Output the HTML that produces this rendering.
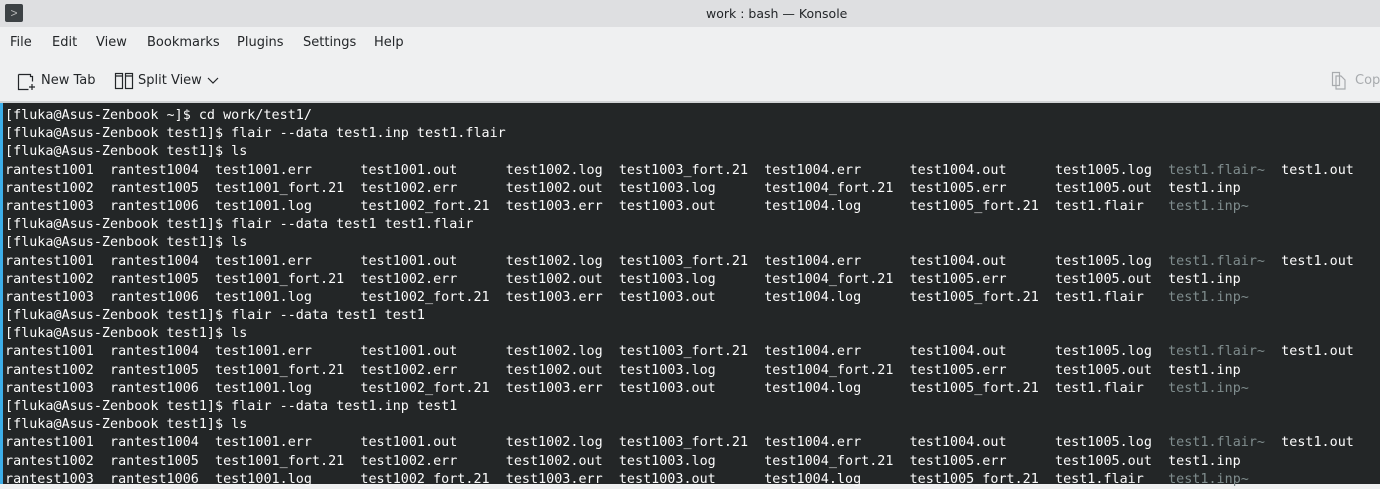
<!DOCTYPE html><html><head><style>
body{margin:0;width:1380px;height:484px;overflow:hidden;background:#eff0f1;font-family:"Liberation Sans","DejaVu Sans",sans-serif;position:relative}
.title{position:absolute;top:0;left:0;width:1380px;height:27px;background:#dedfe1;}
.title .t{position:absolute;left:706px;top:6px;font-size:12.5px;color:#232629;font-family:"DejaVu Sans",sans-serif}
.ic{position:absolute;left:5px;top:4px;width:18px;height:18px;background:#3d4245;border-radius:2px;color:#bbb;font-size:12px;text-align:center;line-height:18px}
.menu{position:absolute;top:35px;font-size:13px;color:#232629;font-family:"DejaVu Sans",sans-serif}
.tb{position:absolute;top:73px;font-size:13px;color:#232629;font-family:"DejaVu Sans",sans-serif}
.sep{position:absolute;top:101px;left:0;width:1380px;height:2px;background:#d0d2d4}
.term{position:absolute;top:103px;left:0;width:1380px;height:381px;background:#232627;border-left:3px solid #3daee9;box-sizing:border-box}
pre{margin:0;padding:4px 0 0 2px;font-family:"DejaVu Sans Mono","Liberation Mono",monospace;font-size:13.4px;letter-spacing:0.015px;line-height:18.18px;color:#fcfcfc}
.g{color:#7f8c8d}
</style></head><body>
<div class="title"><div class="ic">&gt;</div><div class="t">work : bash — Konsole</div></div>
<div class="menu" style="left:10px">File</div>
<div class="menu" style="left:52px">Edit</div>
<div class="menu" style="left:96px">View</div>
<div class="menu" style="left:147px">Bookmarks</div>
<div class="menu" style="left:237px">Plugins</div>
<div class="menu" style="left:303px">Settings</div>
<div class="menu" style="left:374px">Help</div>
<svg style="position:absolute;left:17px;top:71px" width="20" height="20" viewBox="0 0 20 20" fill="none" stroke="#232629" stroke-width="1.2"><path d="M1.5 3.5h12v2h2v5M1.5 3.5v15h10"/><path d="M15 13v6M12 16h6"/></svg>
<div class="tb" style="left:41px">New Tab</div>
<svg style="position:absolute;left:114px;top:72px" width="20" height="18" viewBox="0 0 20 18" fill="none" stroke="#232629" stroke-width="1.2"><rect x="1.5" y="1.5" width="7" height="15"/><rect x="11.5" y="1.5" width="7" height="15"/><path d="M1.5 4h7M11.5 4h7"/></svg>
<div class="tb" style="left:138px">Split View</div>
<svg style="position:absolute;left:207px;top:77px" width="12" height="8" viewBox="0 0 12 8" fill="none" stroke="#232629" stroke-width="1.2"><path d="M1 1l5 5 5-5"/></svg>
<svg style="position:absolute;left:1331px;top:71px" width="16" height="20" viewBox="0 0 16 20" fill="none" stroke="#a8abae" stroke-width="1.2"><path d="M1.5 1.5h7v13h-7z M5 5h5l4 4v9h-9z"/></svg>
<div class="tb" style="left:1355px;color:#a8abae">Copy</div>
<div class="sep"></div>
<div class="term"><pre>[fluka@Asus-Zenbook ~]$ cd work/test1/
[fluka@Asus-Zenbook test1]$ flair --data test1.inp test1.flair
[fluka@Asus-Zenbook test1]$ ls
rantest1001  rantest1004  test1001.err      test1001.out      test1002.log  test1003_fort.21  test1004.err      test1004.out      test1005.log  <span class="g">test1.flair~</span>  test1.out
rantest1002  rantest1005  test1001_fort.21  test1002.err      test1002.out  test1003.log      test1004_fort.21  test1005.err      test1005.out  test1.inp
rantest1003  rantest1006  test1001.log      test1002_fort.21  test1003.err  test1003.out      test1004.log      test1005_fort.21  test1.flair   <span class="g">test1.inp~</span>
[fluka@Asus-Zenbook test1]$ flair --data test1 test1.flair
[fluka@Asus-Zenbook test1]$ ls
rantest1001  rantest1004  test1001.err      test1001.out      test1002.log  test1003_fort.21  test1004.err      test1004.out      test1005.log  <span class="g">test1.flair~</span>  test1.out
rantest1002  rantest1005  test1001_fort.21  test1002.err      test1002.out  test1003.log      test1004_fort.21  test1005.err      test1005.out  test1.inp
rantest1003  rantest1006  test1001.log      test1002_fort.21  test1003.err  test1003.out      test1004.log      test1005_fort.21  test1.flair   <span class="g">test1.inp~</span>
[fluka@Asus-Zenbook test1]$ flair --data test1 test1
[fluka@Asus-Zenbook test1]$ ls
rantest1001  rantest1004  test1001.err      test1001.out      test1002.log  test1003_fort.21  test1004.err      test1004.out      test1005.log  <span class="g">test1.flair~</span>  test1.out
rantest1002  rantest1005  test1001_fort.21  test1002.err      test1002.out  test1003.log      test1004_fort.21  test1005.err      test1005.out  test1.inp
rantest1003  rantest1006  test1001.log      test1002_fort.21  test1003.err  test1003.out      test1004.log      test1005_fort.21  test1.flair   <span class="g">test1.inp~</span>
[fluka@Asus-Zenbook test1]$ flair --data test1.inp test1
[fluka@Asus-Zenbook test1]$ ls
rantest1001  rantest1004  test1001.err      test1001.out      test1002.log  test1003_fort.21  test1004.err      test1004.out      test1005.log  <span class="g">test1.flair~</span>  test1.out
rantest1002  rantest1005  test1001_fort.21  test1002.err      test1002.out  test1003.log      test1004_fort.21  test1005.err      test1005.out  test1.inp
rantest1003  rantest1006  test1001.log      test1002_fort.21  test1003.err  test1003.out      test1004.log      test1005_fort.21  test1.flair   <span class="g">test1.inp~</span>
</pre></div>
</body></html>
